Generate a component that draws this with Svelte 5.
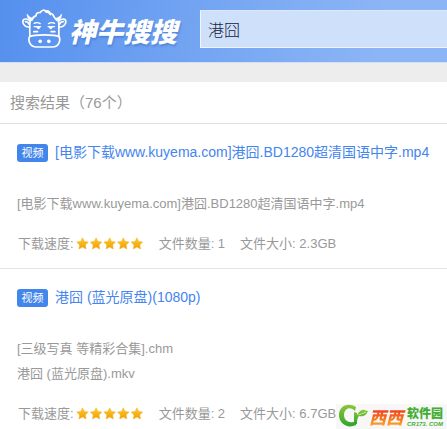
<script>
  let query = $state('港囧');
  const total = 76;
  const results = [
    {
      title: '[电影下载www.kuyema.com]港囧.BD1280超清国语中字.mp4',
      files: ['[电影下载www.kuyema.com]港囧.BD1280超清国语中字.mp4'],
      stars: 5,
      count: 1,
      size: '2.3GB'
    },
    {
      title: '港囧 (蓝光原盘)(1080p)',
      files: ['[三级写真 等精彩合集].chm', '港囧 (蓝光原盘).mkv'],
      stars: 5,
      count: 2,
      size: '6.7GB'
    }
  ];
</script>

<div class="page">
  <header>
    <a class="logo" href="#home">
      <svg class="cow" viewBox="18 20 140 123" aria-hidden="true">
        <g fill="none" stroke="#fff" stroke-width="5" stroke-linecap="round" stroke-linejoin="round">
          <path d="M50 57C52 50 56 45 63 43C62 36 69 32 75 34C79 26 88 24 92 30C98 27 104 30 104 35C108 36 111 38 113 40C116 47 119 52 125 57" />
          <path d="M91 31C98 32 103 35 106 40" />
          <path d="M54 51C45 49 39 45 36 38C35 46 39 53 46 58ZM121 51C130 49 136 45 139 38C140 46 136 53 129 58Z" fill="#fff" stroke-width="2" />
          <path d="M45 59C36 51 24 51 23 60C22 70 33 78 43 77M130 59C140 51 151 51 152 60C153 70 142 78 132 77" />
          <path d="M31 61C35 60 39 63 42 69M144 61C140 60 136 63 133 69" />
          <path d="M45 59C43 70 44 90 44 104C37 117 44 137 64 137H112C131 137 138 117 131 104C131 90 132 70 130 59" />
          <path d="M44 106C55 99 120 99 131 106" />
          <path d="M57 66Q66 61 75 67M100 67Q109 61 118 66" stroke-width="4" />
          <path d="M57 76H76M99 76H118" stroke-width="4" />
          <path d="M56 91H67M108 91H119" />
        </g>
        <g fill="#fff">
          <path d="M63 75H76Q75 84 69 84Q64 83 63 75ZM100 75H113Q112 84 106 84Q101 83 100 75Z" />
          <circle cx="75" cy="120" r="5.5" />
          <circle cx="101" cy="120" r="5.5" />
        </g>
      </svg>
      <span>神牛搜搜</span>
    </a>
    <input type="text" aria-label="搜索" bind:value={query} />
  </header>

  <main>
    <h1>搜索结果（{total}个）</h1>
    {#each results as item}
      <article>
        <h2><span class="badge">视频</span><a href="#detail">{item.title}</a></h2>
        <ul>
          {#each item.files as file}
            <li>{file}</li>
          {/each}
        </ul>
        <div class="meta">
          <span class="speed">
            下载速度:
            <svg class="stars" viewBox="0 0 68 13" role="img" aria-label="{item.stars}星">
              <defs>
                <linearGradient id="gold" x1="0" y1="0" x2="0" y2="1">
                  <stop offset="0" stop-color="#fbcf2c" />
                  <stop offset="1" stop-color="#f39a08" />
                </linearGradient>
              </defs>
              {#each Array(item.stars) as _, i}
                <path
                  transform="translate({i * 13.6} 0)"
                  d="M6.5 .8L8.3 4.4L12.3 5L9.4 7.9L10.1 12L6.5 10.1L2.9 12L3.6 7.9L.7 5L4.7 4.4Z"
                  fill="url(#gold)"
                  stroke="#f4b21c"
                  stroke-width=".5"
                  stroke-linejoin="round"
                />
              {/each}
            </svg>
          </span>
          <span>文件数量: {item.count}</span>
          <span>文件大小: {item.size}</span>
        </div>
      </article>
    {/each}
  </main>

  <a class="watermark" href="#cr173" aria-label="西西软件园">
    <svg class="sprout" viewBox="0 0 33 25" aria-hidden="true">
      <defs>
        <linearGradient id="leaf" x1="0" y1="0" x2="0" y2="1">
          <stop offset="0" stop-color="#8cc63a" />
          <stop offset="1" stop-color="#2fa52c" />
        </linearGradient>
      </defs>
      <path
        d="M20 3C12-2 3 2 3 11C3 20 12 25 20 21L20 17C14 20 8 17 8 11C8 4 15 2 19 7Z"
        fill="url(#leaf)"
      />
      <path d="M18 8L21 9V11C22 10 23 7 26 6C28 5 30 7 32 7C30 12 26 13 23 12C21 14 21 17 21 20H18Z" fill="url(#leaf)" />
      <path d="M22 11Q26 10 30 8" fill="none" stroke="#d9f0b6" stroke-width=".8" />
    </svg>
    <b class="xixi">西西</b>
    <span class="site">
      <b>软件园</b>
      <i>CR173. COM</i>
    </span>
  </a>
</div>

<style>
  :global(body) {
    margin: 0;
    background: #fff;
  }
  .page {
    position: relative;
    overflow: hidden;
    font-family: 'Liberation Sans', 'Noto Sans CJK SC', sans-serif;
    color: #999;
  }
  header {
    display: flex;
    align-items: flex-start;
    gap: 20px;
    height: 62px;
    border-bottom: 1px solid #d3e0f4;
    background: linear-gradient(100deg, #5590ee, #74a5f2 45%, #8cb5f5 85%);
  }
  .logo {
    display: flex;
    flex: none;
    width: 180px;
    box-sizing: border-box;
    padding: 8px 0 0 21px;
    gap: 1px;
    color: #fff;
    text-decoration: none;
  }
  .cow {
    flex: none;
    width: 47px;
    height: 41px;
  }
  .logo span {
    font: italic 900 27px/46px 'Noto Sans CJK SC', sans-serif;
    white-space: nowrap;
    text-shadow: 1px 2px 2px rgba(40, 90, 180, 0.35);
  }
  input {
    flex: 1;
    min-width: 0;
    height: 38px;
    margin-top: 10px;
    padding: 0 7px;
    box-sizing: border-box;
    border: 1px solid #f0f6ff;
    border-top-color: #dce8fb;
    border-right: 0;
    border-radius: 0;
    outline: 0;
    background: #cfe0fa;
    color: #14233f;
    font: 300 16px 'Liberation Sans', 'Noto Sans CJK SC', sans-serif;
  }
  main {
    border-top: 19px solid #ededed;
  }
  h1 {
    margin: 0;
    padding: 0 10px;
    border-bottom: 1px solid #e0e0e0;
    font-size: 15px;
    font-weight: 400;
    line-height: 41px;
  }
  article {
    padding: 16px 0 12px 17px;
    border-bottom: 1px solid #e4e4e4;
  }
  h2 {
    display: flex;
    align-items: center;
    gap: 7px;
    height: 25px;
    margin: 0;
    font-size: 14px;
    font-weight: 400;
    white-space: nowrap;
  }
  h2 a {
    color: #4485ee;
    line-height: 25px;
    text-decoration: none;
  }
  .badge {
    width: 31px;
    border-radius: 3px;
    background: #4285eb;
    color: #fff;
    font-size: 11px;
    line-height: 18px;
    text-align: center;
  }
  ul {
    margin: 26px 0 15px;
    padding: 0;
    list-style: none;
    font-size: 13px;
    line-height: 25px;
    white-space: nowrap;
  }
  .meta {
    display: flex;
    gap: 15px;
    padding-left: 1px;
    font-size: 13px;
    line-height: 25px;
    white-space: nowrap;
  }
  .speed {
    display: flex;
    align-items: center;
    gap: 2px;
  }
  .stars {
    width: 68px;
    height: 13px;
  }
  .watermark {
    position: absolute;
    right: 0;
    bottom: 10px;
    display: flex;
    width: 111px;
    height: 25px;
    background: #f7f7f7;
    font-family: 'Noto Sans CJK SC', sans-serif;
    text-decoration: none;
  }
  .sprout {
    width: 33px;
    height: 25px;
  }
  .xixi {
    width: 38px;
    background: linear-gradient(#f0401c 25%, #fb9a24 80%);
    background-clip: text;
    color: transparent;
    font-size: 17px;
    font-style: italic;
    font-weight: 900;
    line-height: 25px;
  }
  .site {
    display: flex;
    flex-direction: column;
    padding-top: 1px;
    color: #43ad32;
    white-space: nowrap;
  }
  .site b {
    font-size: 12px;
    font-weight: 900;
    line-height: 16px;
  }
  .site i {
    font: italic 700 6px/6px 'Liberation Sans', sans-serif;
  }
</style>
